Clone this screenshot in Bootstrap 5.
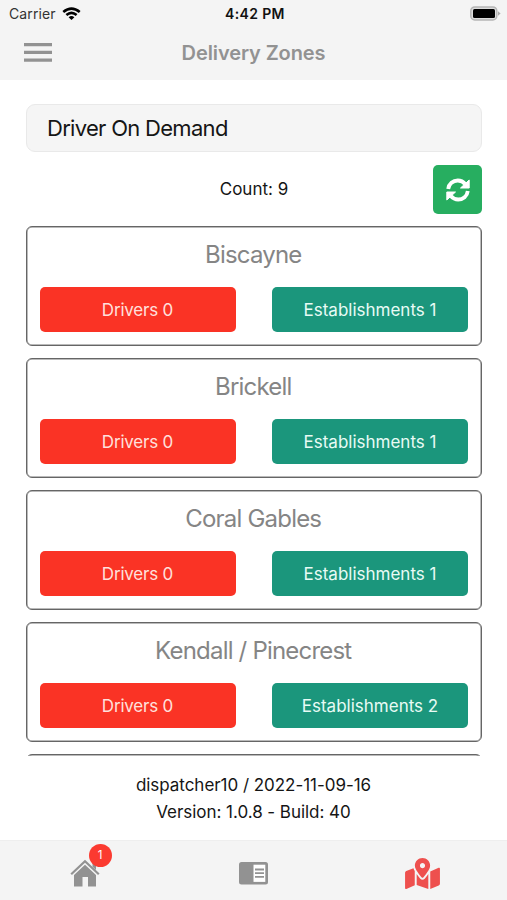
<!DOCTYPE html>
<html lang="en">
<head>
<meta charset="utf-8">
<meta name="viewport" content="width=device-width, initial-scale=1">
<title>Delivery Zones</title>
<link href="https://cdn.jsdelivr.net/npm/bootstrap@5.3.0/dist/css/bootstrap.min.css" rel="stylesheet">
<style>
  body { font-family: Inter, "Liberation Sans", sans-serif; color: #151515; font-size: 17px; background: #fff; }
  svg { display: block; flex: none; }
  .app-head { background: #f4f4f4; height: 80px; }
  .status-bar { height: 27px; padding: 0 6px 0 9px; display: grid; grid-template-columns: 1fr auto 1fr; align-items: center; font-size: 14px; }
  .carrier { letter-spacing: .1px; color: #333; }
  .wifi { margin-left: 6px; }
  .clock { font-weight: 600; font-size: 14px; letter-spacing: .35px; color: #111; }
  .title-bar { height: 51px; padding: 0 24px; display: grid; grid-template-columns: 1fr auto 1fr; align-items: center; }
  .page-title { font-size: 20px; font-weight: 600; color: #929292; letter-spacing: -.1px; }
  .screen-body { height: 676px; padding: 24px 25px 0 26px; overflow: hidden; }
  .mode-field { height: 48px; padding-left: 20px; border: 1px solid #e9e9e9; border-radius: 9px; background: #f5f5f5; font-size: 22px; letter-spacing: -.7px; }
  .count-row { height: 49px; margin: 13px 0 12px; display: grid; grid-template-columns: 49px 1fr 49px; align-items: center; }
  .refresh-btn { width: 49px; height: 49px; background: #27ae60; border-radius: 5px; }
  .zone { height: 120px; padding: 0 13px 0 12.5px; border: 1px solid #666; box-shadow: inset 0 0 0 .5px #777; border-radius: 6px; margin-bottom: 12px; flex: none; }
  .zone-name { height: 60px; line-height: 55px; font-size: 24px; font-weight: 400; color: #858585; letter-spacing: -.8px; padding-right: 1px; }
  .zone-btn { width: 196px; height: 45px; padding: 0; border: 0; border-radius: 5px; color: #fff; font-size: 17px; letter-spacing: -.2px; line-height: 46px; }
  .zone-btn.drivers { background: #fa3325; color: #ffe0dc; }
  .zone-btn.places { background: #1b967c; color: #e8fbf5; letter-spacing: 0; }
  .build-info { height: 84px; padding-top: 16px; line-height: 27px; font-size: 17px; letter-spacing: -.04px; }
  .tab-bar { height: 60px; padding-top: 5px; background: #f4f4f4; border-top: 1px solid #eee; }
  .tab-badge { left: 19px; top: -15px; width: 23px; height: 23px; background: #fb3a30; color: #fff; font-size: 11.5px; line-height: 23px; }
</style>
<script src="https://cdn.jsdelivr.net/npm/bootstrap@5.3.0/dist/js/bootstrap.bundle.min.js"></script>
</head>
<body class="vh-100 overflow-hidden d-flex flex-column">
<header class="app-head">
  <div class="status-bar">
    <div class="d-flex align-items-center">
      <span class="carrier">Carrier</span>
      <svg class="wifi" width="19" height="14" viewBox="0 0 20 15" fill="none" stroke="#000" stroke-width="2.800"><path d="M1.200 5.300Q10-2 18.800 5.300M4.500 8.600Q10 4 15.500 8.600"/><path d="M10 14 6.900 11Q10 8.400 13.100 11Z" fill="#000" stroke="none"/></svg>
    </div>
    <span class="clock">4:42 PM</span>
    <svg class="ms-auto" width="31" height="15" viewBox="0 0 31 15"><rect x=".8" y=".9" width="26" height="13" rx="4" fill="#ddd" stroke="#b5b5b5" stroke-width="1.500"/><rect x="3" y="3" width="22" height="9" rx="1.500"/><path d="M28 5.200 30.600 7.500 28 9.800Z" fill="#aaa"/></svg>
  </div>
  <div class="title-bar">
    <svg width="28" height="19" viewBox="0 0 28 19" fill="#929292"><path d="M0 0h28v3.200H0zM0 7.800h28V11H0zM0 15.500h28v3.200H0z"/></svg>
    <h1 class="page-title m-0">Delivery Zones</h1>
    <span></span>
  </div>
</header>
<main class="screen-body">
  <div class="mode-field d-flex align-items-center">Driver On Demand</div>
  <div class="count-row">
    <span></span>
    <div class="text-center">Count: 9</div>
    <button class="refresh-btn btn border-0 p-0 d-flex align-items-center justify-content-center" aria-label="Refresh">
      <svg width="24" height="24" viewBox="0 0 24 24" fill="none" stroke="#fff" stroke-width="3.800"><g id="turn"><path d="M2.200 11C2.800 5.800 7 2.500 11.800 2.500c3.400 0 5.500 1.300 7.600 3.800"/><path d="M23.200 2v8h-8.700Z" fill="#fff" stroke-width="1" stroke-linejoin="round"/></g><use href="#turn" transform="rotate(180 12 12)"/></svg>
    </button>
  </div>
  <div class="d-flex flex-column">
    <section class="zone"><h2 class="zone-name text-center m-0">Biscayne</h2><div class="d-flex justify-content-between"><button class="btn zone-btn drivers">Drivers 0</button><button class="btn zone-btn places">Establishments 1</button></div></section>
    <section class="zone"><h2 class="zone-name text-center m-0">Brickell</h2><div class="d-flex justify-content-between"><button class="btn zone-btn drivers">Drivers 0</button><button class="btn zone-btn places">Establishments 1</button></div></section>
    <section class="zone"><h2 class="zone-name text-center m-0">Coral Gables</h2><div class="d-flex justify-content-between"><button class="btn zone-btn drivers">Drivers 0</button><button class="btn zone-btn places">Establishments 1</button></div></section>
    <section class="zone"><h2 class="zone-name text-center m-0">Kendall / Pinecrest</h2><div class="d-flex justify-content-between"><button class="btn zone-btn drivers">Drivers 0</button><button class="btn zone-btn places">Establishments 2</button></div></section>
    <section class="zone"></section>
  </div>
</main>
<div class="build-info text-center">
  <div>dispatcher10 / 2022-11-09-16</div>
  <div>Version: 1.0.8 - Build: 40</div>
</div>
<nav class="tab-bar row g-0 align-items-center">
  <div class="col d-flex justify-content-center">
    <div class="position-relative">
      <svg width="30" height="28" viewBox="0 0 30 28"><path d="M1.200 15.300 15 2.300l13.800 13" fill="none" stroke="#929292" stroke-width="2.200"/><path d="M22.500 3.500H26V11l-3.500-3.300ZM15 5.800 26 16v11.500h-8V18h-5.500v9.500H4V16Z" fill="#929292"/></svg>
      <span class="tab-badge position-absolute rounded-circle text-center">1</span>
    </div>
  </div>
  <div class="col d-flex justify-content-center">
    <svg width="29" height="23" viewBox="0 0 29 23"><rect width="29" height="22.500" rx="2.500" fill="#929292"/><path d="M14.500 2.700h11.800v17.200H14.500z" fill="#fff"/><path d="M16 7.500h9M16 11.200h9M16 14.900h9" stroke="#929292" stroke-width="1.800"/></svg>
  </div>
  <div class="col d-flex justify-content-center">
    <svg width="35" height="31" viewBox="0 0 576 512" fill="#ee504e"><path d="M288 0c-69.590 0-126 56.410-126 126 0 56.260 82.350 158.800 113.900 196.020 6.390 7.540 17.820 7.540 24.200 0C331.650 284.800 414 182.260 414 126 414 56.410 357.590 0 288 0zm0 168c-23.200 0-42-18.800-42-42s18.800-42 42-42 42 18.800 42 42-18.800 42-42 42zM20.120 215.950A32.006 32.006 0 0 0 0 245.660v250.320c0 11.320 11.430 19.060 21.940 14.860L160 448V214.920c-8.840-15.980-16.070-31.540-21.250-46.420L20.120 215.950zM288 359.670c-14.070 0-27.380-6.180-36.510-16.960-19.660-23.200-40.570-49.620-59.490-76.720v182l192 64V266c-18.920 27.090-39.820 53.520-59.490 76.720-9.130 10.770-22.440 16.950-36.510 16.950zm266.060-198.510L416 224v288l139.880-55.950A31.996 31.996 0 0 0 576 426.340V176.020c0-11.320-11.430-19.060-21.940-14.860z"/></svg>
  </div>
</nav>
</body>
</html>
